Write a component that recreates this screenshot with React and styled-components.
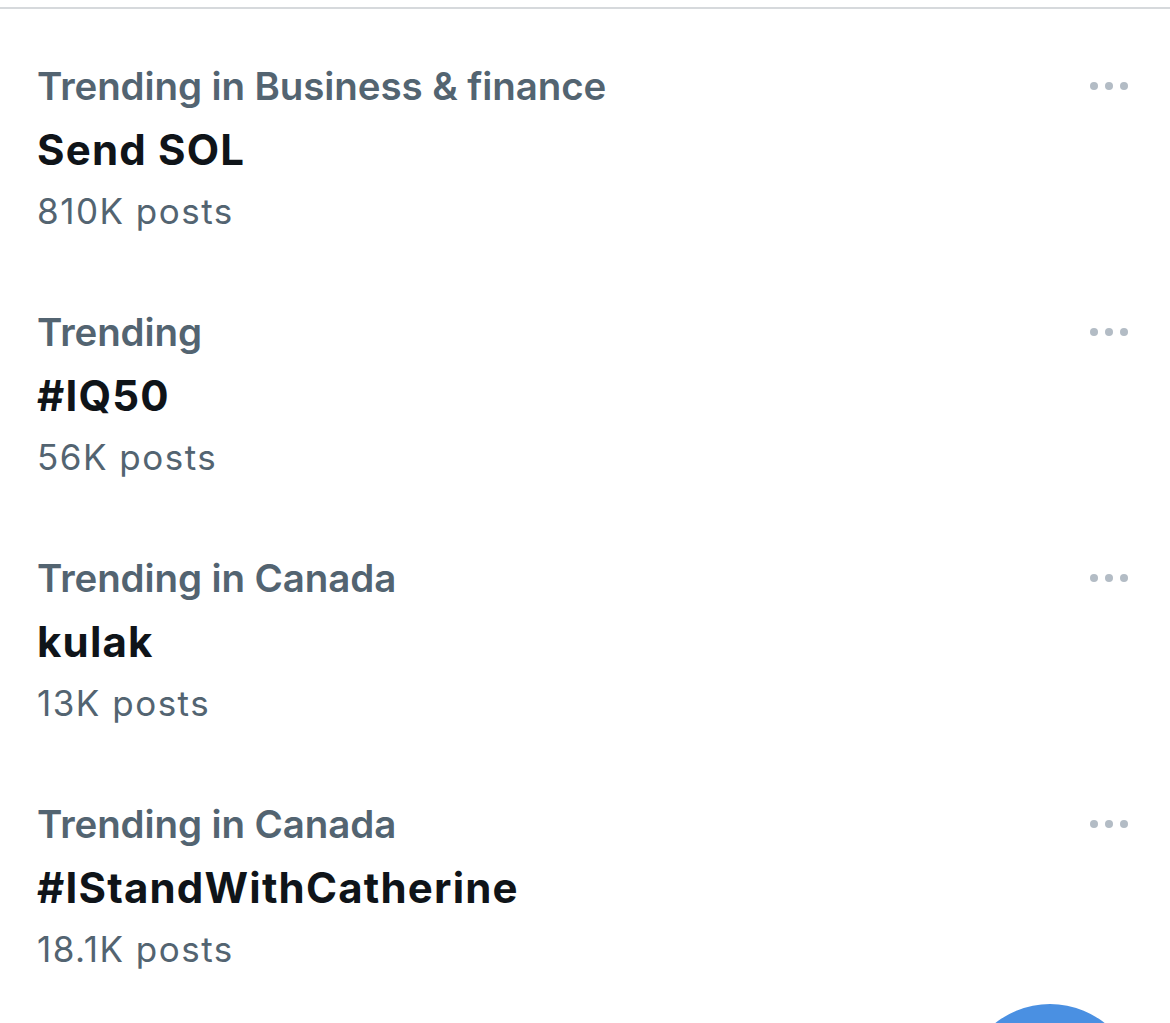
import styled, { createGlobalStyle } from "styled-components";

const GlobalStyle = createGlobalStyle`
  html, body {
    margin: 0;
    padding: 0;
    background: #fff;
  }
  body {
    font-family: Inter, "Noto Sans", "Liberation Sans", sans-serif;
    -webkit-font-smoothing: antialiased;
  }
`;

const trends = [
  { category: "Trending in Business & finance", title: "Send SOL", posts: "810K posts" },
  { category: "Trending", title: "#IQ50", posts: "56K posts" },
  { category: "Trending in Canada", title: "kulak", posts: "13K posts" },
  { category: "Trending in Canada", title: "#IStandWithCatherine", posts: "18.1K posts" },
];

const App = () => {
  return (
    <>
      <GlobalStyle />
      <Screen>
        <TopRule />
        <TrendList>
          {trends.map((t, i) => (
            <TrendRow key={i}>
              <TrendText>
                <Category>{t.category}</Category>
                <Title>{t.title}</Title>
                <Posts>{t.posts}</Posts>
              </TrendText>
              <MoreButton aria-label="More">
                <span />
                <span />
                <span />
              </MoreButton>
            </TrendRow>
          ))}
        </TrendList>
        <Fab aria-label="Compose" />
      </Screen>
    </>
  );
};

const Screen = styled.div`
  position: relative;
  width: 1170px;
  height: 1023px;
  overflow: hidden;
  background: #fff;
`;

const TopRule = styled.div`
  height: 7px;
  border-bottom: 2px solid #d6d9dc;
`;

const TrendList = styled.div`
  display: flex;
  flex-direction: column;
  padding-top: 16px;
`;

const TrendRow = styled.div`
  display: flex;
  justify-content: space-between;
  align-items: flex-start;
  padding: 30px 42px 30px 37px;
`;

const TrendText = styled.div`
  display: flex;
  flex-direction: column;
`;

const Category = styled.div`
  font-size: 38.5px;
  line-height: 62px;
  font-weight: 600;
  letter-spacing: -0.1px;
  color: #536471;
`;

const Title = styled.div`
  font-size: 42px;
  line-height: 62px;
  font-weight: 700;
  letter-spacing: 1.2px;
  color: #0f1419;
  margin-top: 2px;
`;

const Posts = styled.div`
  font-size: 35px;
  line-height: 60px;
  font-weight: 400;
  letter-spacing: 1.5px;
  color: #536471;
`;

const MoreButton = styled.button`
  display: flex;
  gap: 7px;
  align-items: center;
  height: 62px;
  padding: 0;
  border: none;
  background: none;
  span {
    width: 8px;
    height: 8px;
    border-radius: 50%;
    background: #b3bcc5;
  }
`;

const Fab = styled.button`
  position: absolute;
  left: 962px;
  top: 1004px;
  width: 176px;
  height: 176px;
  border-radius: 50%;
  border: none;
  background: #4a90e2;
`;

export default App;
